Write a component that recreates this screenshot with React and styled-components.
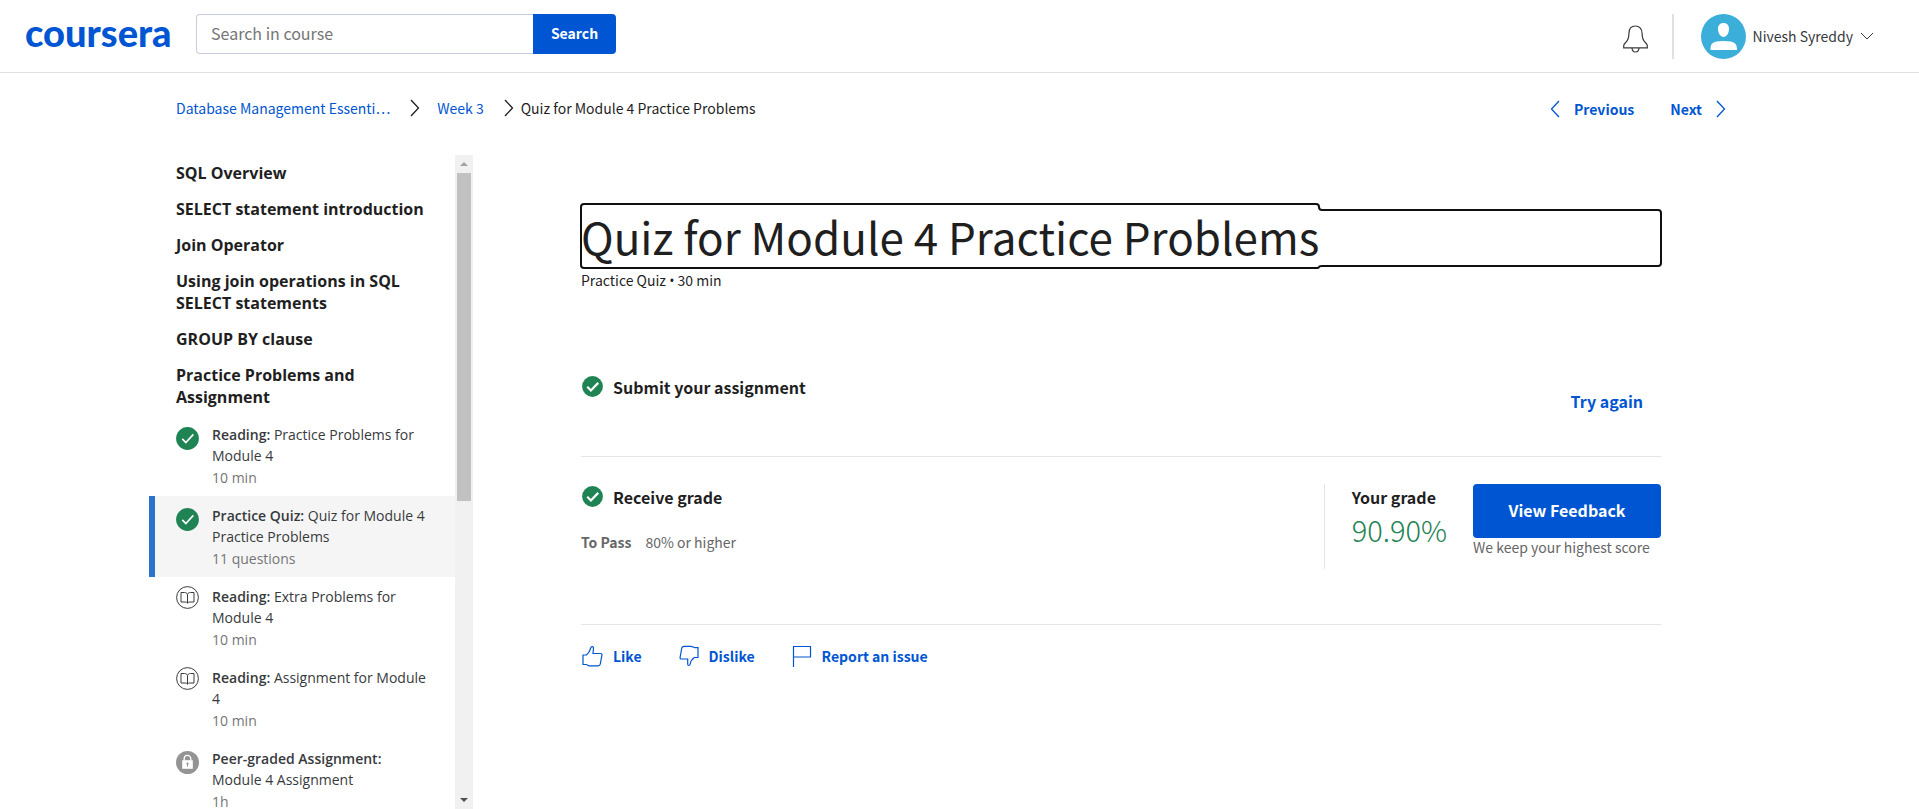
import React from "react";
import styled, { createGlobalStyle } from "styled-components";

const SANS = '"Noto Sans CJK SC", "Open Sans", sans-serif';
const OPEN = '"Open Sans", "Noto Sans", sans-serif';
const BLUE = "#0056d2";
const GREEN = "#1f8354";

const GlobalStyle = createGlobalStyle`
  *, *::before, *::after { box-sizing: border-box; }
  body { margin: 0; background: #fff; color: #1f1f1f; font: 400 14px/20px ${SANS}; }
  h1, h2, p, ul, ol { margin: 0; padding: 0; font-weight: 400; }
  ul, ol { list-style: none; }
  a { color: ${BLUE}; text-decoration: none; }
  button { border: 0; padding: 0; margin: 0; background: none; font: inherit; cursor: pointer; }
  svg { display: block; flex: none; }
`;

const Page = styled.div`
  height: 100vh;
  display: flex;
  flex-direction: column;
  overflow: hidden;
`;

const Header = styled.header`
  display: flex;
  align-items: center;
  height: 73px;
  flex: none;
  padding: 0 45px 0 25px;
  border-bottom: 1px solid #e1e1e1;
`;

const Logo = styled.a`
  width: 171px;
  font: 900 38px/44px Lato, sans-serif;
  padding-bottom: 8px;
`;

const SearchForm = styled.form`
  display: flex;
  width: 420px;
  height: 40px;
  margin-bottom: 4px;
`;

const SearchInput = styled.input`
  flex: 1;
  min-width: 0;
  padding: 0 14px 2px;
  border: 1px solid #c7cdde;
  border-right: 0;
  border-radius: 4px 0 0 4px;
  font: 400 16px/24px ${SANS};
  color: #1f1f1f;
  &::placeholder { color: #757575; opacity: 1; }
`;

const SearchButton = styled.button`
  width: 83px;
  padding-bottom: 2px;
  border-radius: 0 4px 4px 0;
  background: ${BLUE};
  color: #fff;
  font-weight: 700;
`;

const HeaderTools = styled.div`
  display: flex;
  align-items: center;
  margin-left: auto;
`;

const BellButton = styled.button`
  padding: 6px 24px 0 0;
`;

const ToolDivider = styled.span`
  width: 2px;
  height: 45px;
  background: #e1e1e1;
`;

const UserButton = styled.button`
  display: flex;
  align-items: center;
  gap: 7px;
  margin-left: 27px;
  color: #373a3c;
`;

const Container = styled.div`
  width: 100%;
  max-width: 1621px;
  margin: 0 auto;
`;

const TopNav = styled(Container)`
  display: flex;
  justify-content: space-between;
  align-items: center;
  flex: none;
  height: 82px;
  padding: 0 44px 10px 27px;
`;

const Crumbs = styled.ol`
  display: flex;
  align-items: center;
  padding-bottom: 2px;
`;

const Crumb = styled.li`
  display: flex;
  align-items: center;
  & > svg { margin: 0 ${(p) => (p.$tight ? 7 : 17)}px 0 20px; }
`;

const Pager = styled.nav`
  display: flex;
  gap: 36px;
`;

const PagerLink = styled.a`
  display: flex;
  align-items: center;
  gap: 14px;
  font-weight: 700;
`;

const Body = styled(Container)`
  display: flex;
  flex: 1;
  min-height: 0;
`;

const Sidebar = styled.aside`
  display: flex;
  width: 324px;
  flex: none;
  font-family: ${OPEN};
`;

const Outline = styled.nav`
  flex: 1;
  min-width: 0;
  overflow: hidden;
`;

const GroupTitle = styled.h2`
  padding: 7px 27px;
  font: 700 16px/22px ${OPEN};
  color: #1f1f1f;
`;

const Item = styled.a`
  display: flex;
  gap: 13px;
  height: 81px;
  padding: 9px 25px 7px 21px;
  border-left: 6px solid ${(p) => (p.$active ? "#2a73cc" : "transparent")};
  background: ${(p) => (p.$active ? "#f5f5f5" : "transparent")};
  color: #373a3c;
  font: 400 14px/21px ${OPEN};
  & > svg { margin-top: ${(p) => (p.$solid ? 3 : 0)}px; }
`;

const Kind = styled.b`
  font-weight: 600;
`;

const Meta = styled.p`
  margin-top: 1px;
  color: #757575;
`;

const Scrollbar = styled.div`
  display: flex;
  flex-direction: column;
  justify-content: space-between;
  width: 18px;
  background: #f1f1f1;
`;

const ScrollArrow = styled.div`
  display: grid;
  place-items: center;
  height: 18px;
`;

const ScrollTrack = styled.div`
  flex: 1;
  padding: 0 2px;
`;

const ScrollThumb = styled.div`
  height: 53%;
  background: #c1c1c1;
`;

const Main = styled.main`
  flex: 1;
  min-width: 0;
  padding: 55px 109px 0 108px;
`;

const Title = styled.h1`
  padding-bottom: 4px;
  font: 400 44px/52px ${SANS};
  color: #1f1f1f;
  outline: 2px auto #101010;
`;

const Subtitle = styled.p`
  margin: 4px 0 83px;
`;

const Bullet = styled.span`
  font-family: ${OPEN};
`;

const Step = styled.section`
  display: flex;
  justify-content: space-between;
  align-items: flex-start;
  padding-bottom: ${(p) => p.$bottom}px;
  margin-bottom: ${(p) => p.$gap}px;
  border-bottom: 1px solid #e5e5e5;
`;

const StepTitle = styled.h2`
  display: flex;
  align-items: center;
  gap: 10px;
  padding-top: 1px;
  padding-left: 1px;
  font: 700 16px/24px ${SANS};
  & > svg { margin-bottom: 1px; }
`;

const PassLine = styled.p`
  display: flex;
  gap: 14px;
  margin-top: 23px;
  color: #666;
`;

const TryAgain = styled.button`
  height: 54px;
  padding: 0 18px;
  color: ${BLUE};
  font: 700 16px/24px ${SANS};
`;

const GradePanel = styled.div`
  display: flex;
  gap: 26px;
  height: 85px;
  padding-left: 27px;
  border-left: 1px solid #e5e5e5;
`;

const GradeLabel = styled.p`
  padding-top: 1px;
  font: 700 16px/24px ${SANS};
`;

const GradeValue = styled.p`
  margin-top: 2px;
  font: 300 29px/36px ${SANS};
  color: ${GREEN};
`;

const FeedbackButton = styled.button`
  display: block;
  width: 188px;
  height: 54px;
  padding-bottom: 2px;
  border-radius: 4px;
  background: ${BLUE};
  color: #fff;
  font: 700 16px/24px ${SANS};
`;

const Note = styled.p`
  color: #666;
  line-height: 18px;
`;

const Feedback = styled.div`
  display: flex;
  gap: 37px;
  padding-left: 1px;
`;

const FeedbackAction = styled.button`
  display: flex;
  align-items: center;
  gap: 10px;
  color: ${BLUE};
  font-weight: 700;
`;

const Arrow = ({ left, color = "#1f1f1f" }) => (
  <svg width="10" height="18" viewBox="0 0 10 18" fill="none" stroke={color} strokeWidth="1.3">
    <path d={left ? "M9 1 1.5 9 9 17" : "M1 1l7.500 8L1 17"} />
  </svg>
);

const CheckIcon = ({ size, heavy }) => (
  <svg width={size} height={size} viewBox="0 0 22 22" fill="none">
    <circle cx="11" cy="11" r="10.900" fill={GREEN} />
    <path
      d={heavy ? "M5.500 11.300l3.800 3.800L17 7.200" : "M6 11.300l3.400 3.500 7.200-7.800"}
      stroke="#fff"
      strokeWidth={heavy ? 2.3 : 1.6}
    />
  </svg>
);

const BookIcon = () => (
  <svg width="23" height="23" viewBox="0 0 23 23" fill="none" stroke="#373a3c">
    <circle cx="11.500" cy="11.500" r="10.900" />
    <path d="M11.500 8.200C10.800 7 9.800 6.500 8.500 6.500H5v9.500h4.200c1 0 1.800.3 2.300 1 .5-.7 1.300-1 2.300-1H18V6.500h-3.500c-1.300 0-2.300.5-3 1.700v9" />
  </svg>
);

const LockIcon = () => (
  <svg width="23" height="23" viewBox="0 0 23 23" fill="none">
    <circle cx="11.500" cy="11.500" r="11.500" fill="#949494" />
    <path d="M8.200 9.500V7.700a3.300 3.300 0 0 1 6.600 0v1.800" stroke="#fff" strokeWidth="1.300" />
    <path d="M6.200 9.200h10.600v8.600H6.200z" fill="#fff" />
    <circle cx="11.500" cy="12.700" r="1.100" fill="#949494" />
    <path d="M11.500 13v2.600" stroke="#949494" />
  </svg>
);

const BellIcon = () => (
  <svg width="25" height="28" viewBox="0 0 25 28" fill="none" stroke="#373a3c" strokeWidth="1.200">
    <path d="M.700 22.800h23.600v-2c0-1.500-.8-2.300-2.200-3.600-2-1.800-3-3.500-3-8.700 0-4.500-2.500-7.500-6.600-7.500S5.900 4 5.900 8.500c0 5.200-1 6.900-3 8.700C1.500 18.500.700 19.300.700 20.800z" />
    <path d="M9 23c.2 2.700 1.500 4 3.500 4s3.300-1.300 3.500-4" />
  </svg>
);

const AvatarIcon = () => (
  <svg width="45" height="45" viewBox="0 0 45 45">
    <circle cx="22.500" cy="22.500" r="22.500" fill="#3bafda" />
    <path
      d="M22.500 9c3.800 0 5.700 2.600 5.500 6.300-.2 4.200-2.500 7.700-5.500 7.700s-5.300-3.500-5.500-7.700C16.800 11.600 18.700 9 22.500 9zM9.500 36c0-6 1-9 13-9s13.500 3 13.500 9z"
      fill="#fff"
    />
  </svg>
);

const CaretIcon = () => (
  <svg width="14" height="8" viewBox="0 0 14 8" fill="none" stroke="#373a3c">
    <path d="M1 1l6 6 6-6" />
  </svg>
);

const LikeIcon = () => (
  <svg width="21" height="22" viewBox="0 0 21 22" fill="none" stroke={BLUE} strokeWidth="1.200">
    <path d="M1 10h3.500C7.500 7.500 8.200 5 8.700 3c.4-2 2.800-1.800 2.800.2L11 8.500h7.500c1 0 1.600.6 1.400 1.700l-1.600 8.800c-.2 1.300-.9 1.900-2.300 1.900H8c-1.800 0-2.500-1.400-4-1.400H1z" />
  </svg>
);

const DislikeIcon = () => (
  <svg width="20" height="22" viewBox="0 0 20 22" fill="none" stroke={BLUE} strokeWidth="1.200">
    <path d="M19 12.500h-3.500c-3.200 2-4 4.500-4.300 6.500-.3 2-2.500 2-2.500 0v-5H2.500c-1 0-1.600-.6-1.400-1.700L2.700 3.500c.2-1.300.9-2.200 2.300-2.200H12c1.800 0 2.500 1.300 4 1.300h3z" />
  </svg>
);

const FlagIcon = () => (
  <svg width="20" height="22" viewBox="0 0 20 22" fill="none" stroke={BLUE} strokeWidth="1.200">
    <path d="M1.500 22V1.500h17v10.500h-17" />
  </svg>
);

const GROUPS = [
  "SQL Overview",
  "SELECT statement introduction",
  "Join Operator",
  "Using join operations in SQL SELECT statements",
  "GROUP BY clause",
  "Practice Problems and Assignment",
];

const ITEMS = [
  { kind: "Reading:", name: "Practice Problems for Module 4", meta: "10 min", icon: "check" },
  { kind: "Practice Quiz:", name: "Quiz for Module 4 Practice Problems", meta: "11 questions", icon: "check", active: true },
  { kind: "Reading:", name: "Extra Problems for Module 4", meta: "10 min", icon: "book" },
  { kind: "Reading:", name: "Assignment for Module 4", meta: "10 min", icon: "book" },
  { kind: "Peer-graded Assignment:", name: "Module 4 Assignment", meta: "1h", icon: "lock" },
];

const ITEM_ICONS = {
  check: <CheckIcon size={23} />,
  book: <BookIcon />,
  lock: <LockIcon />,
};

export default function App() {
  return (
    <Page>
      <GlobalStyle />
      <Header>
        <Logo href="#home">coursera</Logo>
        <SearchForm role="search" onSubmit={(e) => e.preventDefault()}>
          <SearchInput type="text" placeholder="Search in course" aria-label="Search in course" />
          <SearchButton type="submit">Search</SearchButton>
        </SearchForm>
        <HeaderTools>
          <BellButton type="button" aria-label="Notifications">
            <BellIcon />
          </BellButton>
          <ToolDivider />
          <UserButton type="button">
            <AvatarIcon />
            Nivesh Syreddy
            <CaretIcon />
          </UserButton>
        </HeaderTools>
      </Header>

      <TopNav>
        <Crumbs>
          <Crumb>
            <a href="#course">Database Management Essenti…</a>
            <Arrow />
          </Crumb>
          <Crumb $tight>
            <a href="#week-3">Week 3</a>
            <Arrow />
          </Crumb>
          <Crumb>Quiz for Module 4 Practice Problems</Crumb>
        </Crumbs>
        <Pager aria-label="Lesson">
          <PagerLink href="#previous">
            <Arrow left color={BLUE} />
            Previous
          </PagerLink>
          <PagerLink href="#next">
            Next
            <Arrow color={BLUE} />
          </PagerLink>
        </Pager>
      </TopNav>

      <Body>
        <Sidebar>
          <Outline aria-label="Course outline">
            {GROUPS.map((g) => (
              <GroupTitle key={g}>{g}</GroupTitle>
            ))}
            <ul>
              {ITEMS.map((it) => (
                <li key={it.kind + it.name}>
                  <Item href="#item" $active={it.active} $solid={it.icon !== "book"}>
                    {ITEM_ICONS[it.icon]}
                    <div>
                      <p>
                        <Kind>{it.kind}</Kind> {it.name}
                      </p>
                      <Meta>{it.meta}</Meta>
                    </div>
                  </Item>
                </li>
              ))}
            </ul>
          </Outline>
          <Scrollbar aria-hidden="true">
            <ScrollArrow>
              <svg width="8" height="4" viewBox="0 0 8 4">
                <path d="M0 4l4-4 4 4z" fill="#a3a3a3" />
              </svg>
            </ScrollArrow>
            <ScrollTrack>
              <ScrollThumb />
            </ScrollTrack>
            <ScrollArrow>
              <svg width="8" height="4" viewBox="0 0 8 4">
                <path d="M0 0l4 4 4-4z" fill="#505050" />
              </svg>
            </ScrollArrow>
          </Scrollbar>
        </Sidebar>

        <Main>
          <Title tabIndex={-1}>
            <span>Quiz for Module 4 Practice Problems</span>
          </Title>
          <Subtitle>
            Practice Quiz <Bullet>•</Bullet> 30 min
          </Subtitle>

          <Step $bottom={28} $gap={27}>
            <StepTitle>
              <CheckIcon size={21} heavy />
              Submit your assignment
            </StepTitle>
            <TryAgain type="button">Try again</TryAgain>
          </Step>

          <Step $bottom={55} $gap={20}>
            <div>
              <StepTitle>
                <CheckIcon size={21} heavy />
                Receive grade
              </StepTitle>
              <PassLine>
                <b>To Pass</b>
                <span>80% or higher</span>
              </PassLine>
            </div>
            <GradePanel>
              <div>
                <GradeLabel>Your grade</GradeLabel>
                <GradeValue>90.90%</GradeValue>
              </div>
              <div>
                <FeedbackButton type="button">View Feedback</FeedbackButton>
                <Note>We keep your highest score</Note>
              </div>
            </GradePanel>
          </Step>

          <Feedback>
            <FeedbackAction type="button">
              <LikeIcon />
              Like
            </FeedbackAction>
            <FeedbackAction type="button">
              <DislikeIcon />
              Dislike
            </FeedbackAction>
            <FeedbackAction type="button">
              <FlagIcon />
              Report an issue
            </FeedbackAction>
          </Feedback>
        </Main>
      </Body>
    </Page>
  );
}
